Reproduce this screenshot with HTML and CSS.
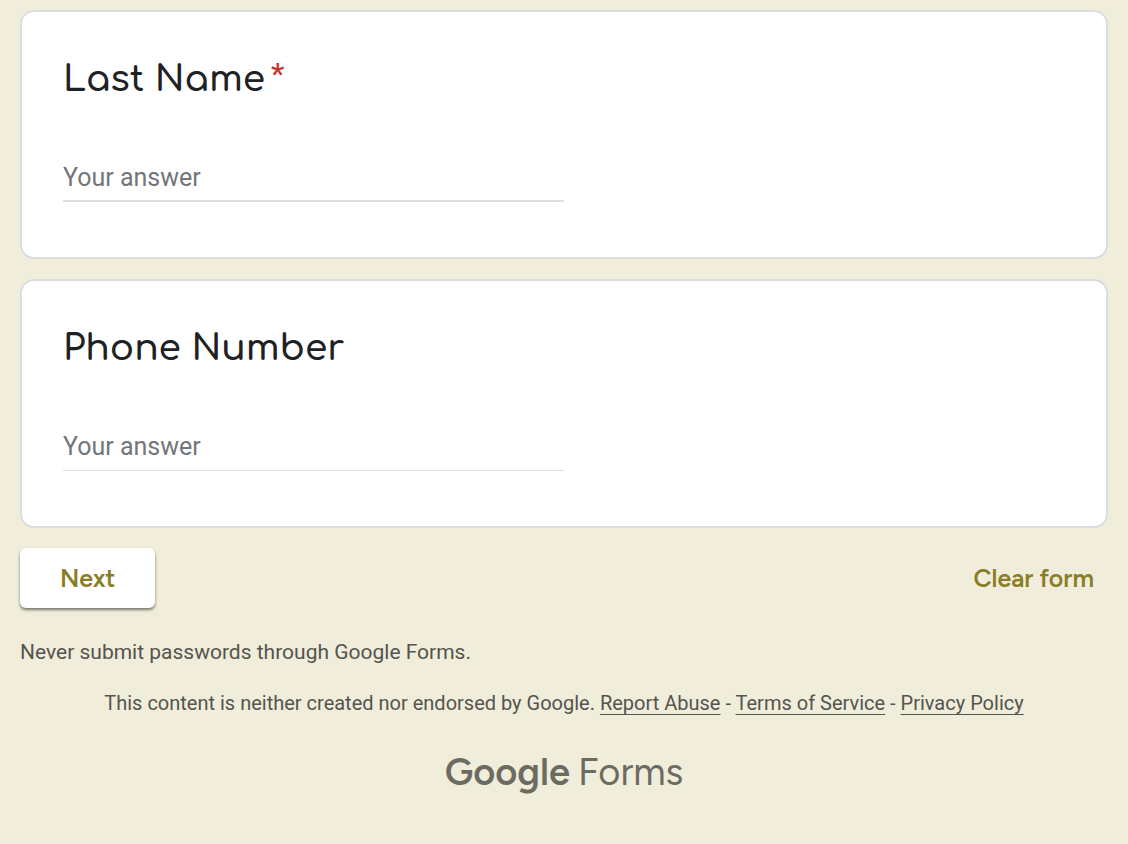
FILE: index.html
```html
<!DOCTYPE html>
<html lang="en">
<head>
<meta charset="utf-8">
<meta name="viewport" content="width=device-width, initial-scale=1">
<title>Google Forms</title>
<link rel="stylesheet" href="styles.css">
</head>
<body>
<main class="page">
  <form class="form">
    <section class="card">
      <label class="question" for="last-name">Last Name<span class="required">*</span></label>
      <input class="answer answer-strong" id="last-name" type="text" placeholder="Your answer" required>
    </section>
    <section class="card">
      <label class="question" for="phone">Phone Number</label>
      <input class="answer" id="phone" type="text" placeholder="Your answer">
    </section>
    <div class="actions">
      <button class="next" type="button">Next</button>
      <button class="clear" type="reset">Clear form</button>
    </div>
  </form>
  <p class="warning">Never submit passwords through Google Forms.</p>
  <footer class="footer">
    <p class="legal">This content is neither created nor endorsed by Google. <a href="#abuse">Report Abuse</a> - <a href="#terms">Terms of Service</a> - <a href="#privacy">Privacy Policy</a></p>
    <a class="logo" href="#forms"><span class="logo-brand">Google</span><span>Forms</span></a>
  </footer>
</main>
</body>
</html>
```
FILE: styles.css
```css
* {
  box-sizing: border-box;
}

body {
  margin: 0;
  background: #f0eddb;
  color: #55544e;
  font-family: Roboto, "Liberation Sans", sans-serif;
}

.page {
  padding: 10px 20px 40px;
}

.form {
  display: flex;
  flex-direction: column;
  gap: 20px;
}

.card {
  display: flex;
  flex-direction: column;
  align-items: flex-start;
  gap: 46px;
  padding: 40px 41px 55px;
  border: 2px solid #dadce0;
  border-radius: 14px;
  background: #fff;
}

.question {
  display: flex;
  align-items: flex-start;
  gap: 6px;
  color: #202124;
  font: 600 36px/54px Comfortaa, Inter, sans-serif;
}

.required {
  color: #c5372c;
  font: 500 30px/44px Roboto, sans-serif;
}

.answer {
  width: 50%;
  height: 50px;
  padding: 2px 0 1px;
  border: 0;
  border-bottom: 1px solid #dedede;
  border-radius: 0;
  outline: 0;
  background: transparent;
  color: #202124;
  font: 400 25px/46px Roboto, sans-serif;
}

.answer-strong {
  padding-bottom: 0;
  border-bottom-width: 2px;
}

.answer::placeholder {
  color: #72767b;
  opacity: 1;
}

.actions {
  display: flex;
  align-items: center;
  justify-content: space-between;
}

.next,
.clear {
  height: 60px;
  border: 0;
  border-radius: 6px;
  color: #897d25;
  font: 600 25px/60px "Google Sans", Figtree, Inter, sans-serif;
  cursor: pointer;
}

.next {
  padding: 0 40px;
  background: #fff;
  box-shadow: 0 2px 3px rgba(0, 0, 0, 0.5);
}

.clear {
  padding: 0 14px;
  background: transparent;
}

.warning {
  margin: 28px 0 0;
  font-size: 21px;
  line-height: 32px;
}

.footer {
  display: flex;
  flex-direction: column;
  align-items: center;
  gap: 30px;
  padding-top: 20px;
}

.legal {
  margin: 0;
  font-size: 20px;
  line-height: 30px;
  text-align: center;
}

.legal a {
  color: inherit;
  text-decoration-thickness: 1px;
  text-underline-offset: 4px;
}

.logo {
  display: flex;
  gap: 8px;
  color: #6c6b61;
  font: 400 38px/48px "Product Sans", Figtree, Lato, sans-serif;
  text-decoration: none;
}

.logo-brand {
  font-weight: 600;
}
```
